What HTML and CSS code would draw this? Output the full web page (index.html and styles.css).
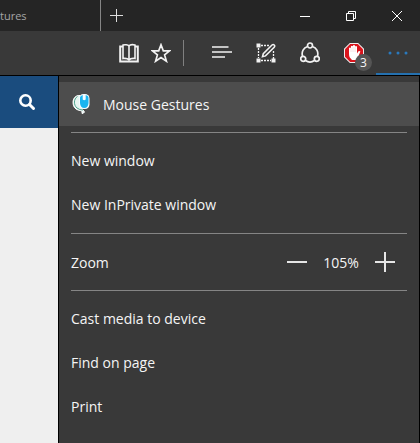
FILE: index.html
```
<!DOCTYPE html>
<html lang="en">
<head>
    <meta charset="UTF-8">
    <meta name="viewport" content="width=device-width, initial-scale=1.0">
    <title>Mouse Gestures</title>
    <link rel="stylesheet" href="styles.css">
</head>
<body>
    <header class="titlebar">
        <div class="tab">tures</div>
        <button class="new-tab" aria-label="New tab">
            <svg width="13" height="13" viewBox="0 0 13 13" fill="none" stroke="#ddd"><path d="M6.5 0v13M0 6.5h13"/></svg>
        </button>
        <div class="window-buttons">
            <button aria-label="Minimize">
                <svg width="10" height="10" viewBox="0 0 10 10" fill="none" stroke="#fff"><path d="M0 5.5h10"/></svg>
            </button>
            <button aria-label="Restore">
                <svg width="10" height="10" viewBox="0 0 10 10" fill="none" stroke="#fff"><path d="M.5 2.5h7v7h-7zM2.500 2.500v-2h7v7h-2"/></svg>
            </button>
            <button aria-label="Close">
                <svg width="10" height="10" viewBox="0 0 10 10" fill="none" stroke="#fff"><path d="M0 0l10 10M10 0L0 10"/></svg>
            </button>
        </div>
    </header>

    <nav class="toolbar">
        <button class="small" aria-label="Reading view">
            <svg width="20" height="20" viewBox="0 0 20 20" fill="none" stroke="#f2f2f2" stroke-width="1.600"><path d="M10 3C9 1.500 5.500 1.500 4 2v13.500c2.300-.3 4.700-.2 6 1.500 1.300-1.700 3.700-1.800 6-1.500V2c-2-.5-5-.5-6 1V17"/><path d="M4 3.500H1.200v15h17.600v-15H16" stroke-width="2"/></svg>
        </button>
        <button class="small" aria-label="Add to favorites">
            <svg width="20" height="20" viewBox="0 0 20 20" fill="none" stroke="#f2f2f2" stroke-width="1.700"><path d="M10 1.800l2.300 6.100h6.300l-5 4 1.800 6.300-5.400-3.700-5.400 3.700 1.800-6.300-5-4h6.300z"/></svg>
        </button>
        <span class="separator"></span>
        <button aria-label="Hub">
            <svg width="20" height="20" viewBox="0 0 20 20" fill="none" stroke="#f2f2f2" stroke-width="1.700"><path d="M0 4h16.500M0 9h20M0 14h13"/></svg>
        </button>
        <button aria-label="Make a Web Note">
            <svg width="20" height="20" viewBox="0 0 20 20" fill="none" stroke="#f2f2f2"><path d="M5 2.500h8M2.500 5v10M5 17.500h10M17.500 8v8" stroke-width="1.300" stroke-dasharray="2 1"/><path d="M.5.500h4v4h-4zM.5 15.500h4v4h-4zM15.500 15.500h4v4h-4z" fill="#f2f2f2" stroke="none"/><path d="M6.500 13.700l.8-3L16 2q1.200-1 2.200 0t0 2.200l-8.700 8.700z" stroke-width="1.600"/></svg>
        </button>
        <button aria-label="Share">
            <svg width="20" height="22" viewBox="0 0 20 22" fill="none" stroke="#f2f2f2" stroke-width="1.700"><circle cx="10" cy="3.500" r="2.500"/><circle cx="3.200" cy="16.800" r="2.500"/><circle cx="16.800" cy="16.800" r="2.500"/><path d="M7.600 4.500C3.500 5.700 1.300 9.800 2.500 14.300M12.400 4.500c4.100 1.200 6.300 5.300 5.100 9.800M5.500 18.500q4.500 3.200 9 0"/></svg>
        </button>
        <button class="blocker" aria-label="Ad blocker, 3 blocked">
            <svg width="22" height="22" viewBox="0 0 22 22"><path d="M6.800 1h8.400L21 6.800v8.400L15.200 21H6.800L1 15.200V6.800z" fill="#f0eeee"/><path d="M7.200 2h7.600L20 7.200v7.600L14.800 20H7.200L2 14.800V7.200z" fill="#d9141c"/><path d="M6 12V6q.9-1 1.900 0V4.300q.9-1 2.100 0V3.500q.9-1 2 0v1q1-1 2 0v7l1.500-2.300q1.400-.7 1.900.3l-2.400 5.800-2.200 2.700H9l-2.200-2.500Q6 14 6 12z" fill="#fff"/><path d="M8 6v4M10 5v5M12.100 5v5" fill="none" stroke="#eab4b6" stroke-width=".4"/></svg>
            <span class="badge">3</span>
        </button>
        <button class="more" aria-label="More">
            <svg width="20" height="20" viewBox="0 0 20 20" fill="#2a79bd"><circle cx="2" cy="10" r="1.500"/><circle cx="10" cy="10" r="1.500"/><circle cx="18" cy="10" r="1.500"/></svg>
        </button>
    </nav>

    <main class="content">
        <div class="page">
            <button class="search" aria-label="Search">
                <svg width="18" height="18" viewBox="0 0 18 18" fill="none" stroke="#fff"><circle cx="7.500" cy="7.500" r="5.200" stroke-width="2.600"/><path d="M11.500 11.500l4 4" stroke-width="3" stroke-linecap="round"/></svg>
            </button>
        </div>
        <div class="menu">
            <button class="item active">
                <!-- mouse with its cable looped round the left side -->
                <svg width="20" height="22" viewBox="0 0 20 22"><path d="M9 2.500C4 2 2 6 2 9.500c0 4 2 6.500 5 7.500l4 1v2.500q1.500 0 2.500-1.500L12 17" fill="#e6f5f1" stroke="#fff"/><path d="M6.500 3.500C2.500 6 2.500 12 6 15q2.500 2 6 2" fill="none" stroke="#3f9a83" stroke-width=".9"/><rect x="8" y="1" width="10.500" height="15" rx="4.500" fill="#f4fcff"/><path d="M9 7V4.500Q9.300 2.500 11.700 2v4.500q1.500 1.500 3 0V2q2.600.5 2.800 2.500V10q-.3 5-4.200 5T9 10z" fill="#19b5f1"/></svg>
                Mouse Gestures
            </button>
            <hr>
            <button class="item">New window</button>
            <button class="item">New InPrivate window</button>
            <hr>
            <div class="item zoom">
                <span class="zoom-label">Zoom</span>
                <button aria-label="Zoom out">
                    <svg width="20" height="20" viewBox="0 0 20 20" fill="none" stroke="#e6e6e6" stroke-width="2"><path d="M0 10h20"/></svg>
                </button>
                <output class="zoom-value">105%</output>
                <button aria-label="Zoom in">
                    <svg width="20" height="20" viewBox="0 0 20 20" fill="none" stroke="#e6e6e6" stroke-width="2"><path d="M0 10h20M10 0v20"/></svg>
                </button>
            </div>
            <hr>
            <button class="item">Cast media to device</button>
            <button class="item">Find on page</button>
            <button class="item">Print</button>
        </div>
    </main>
</body>
</html>
```

FILE: styles.css
```
* {
    box-sizing: border-box;
}
body {
    margin: 0;
    min-height: 100vh;
    display: flex;
    flex-direction: column;
    background-color: #efefef;
    color: #f5f5f5;
    font-family: "Open Sans", "Noto Sans", sans-serif;
    font-size: 14px;
}
button {
    display: flex;
    align-items: center;
    justify-content: center;
    padding: 0;
    border: none;
    background: none;
    color: inherit;
    font: inherit;
}
.titlebar {
    display: flex;
    height: 31px;
    background-color: #252525;
}
.tab {
    width: 101px;
    border-right: 1px solid #858585;
    color: #a5a5a5;
    font-size: 11px;
    line-height: 31px;
}
.new-tab {
    width: 31px;
}
.window-buttons {
    display: flex;
    margin-left: auto;
}
.window-buttons button {
    width: 46px;
}
.toolbar {
    display: flex;
    align-items: center;
    justify-content: flex-end;
    height: 45px;
    background-color: #393939;
    border-bottom: 1px solid #000;
}
.toolbar button {
    width: 44px;
    height: 44px;
}
.toolbar .small {
    width: 32px;
}
.separator {
    width: 1px;
    height: 26px;
    margin: 0 16px 0 6px;
    background-color: #808080;
}
.blocker {
    position: relative;
}
.badge {
    position: absolute;
    right: 4px;
    bottom: 4px;
    width: 17px;
    height: 17px;
    border-radius: 50%;
    background-color: #555;
    font-size: 12px;
    line-height: 17px;
}
.toolbar .more {
    border-top: 2px solid transparent;
    border-bottom: 2px solid #2571b0;
}
.content {
    flex: 1;
    display: flex;
}
.page {
    width: 58px;
}
.search {
    width: 100%;
    height: 52px;
    padding-right: 4px;
    background-color: #1a4c7e;
}
.menu {
    flex: 1;
    padding-top: 6px;
    background-color: #393939;
    border-left: 1px solid #000;
    border-right: 1px solid #000;
}
.item {
    display: flex;
    align-items: center;
    justify-content: flex-start;
    width: 100%;
    height: 44px;
    padding: 0 12px 2px;
}
.active {
    gap: 12px;
    padding-bottom: 0;
    background-color: #4d4d4d;
}
.menu hr {
    height: 1px;
    margin: 6px 12px;
    border: none;
    background-color: #858585;
}
.zoom {
    padding-bottom: 0;
}
.zoom-label {
    flex: 1;
}
.zoom button {
    width: 44px;
    height: 44px;
}
.zoom-value {
    width: 44px;
    text-align: center;
}
```
